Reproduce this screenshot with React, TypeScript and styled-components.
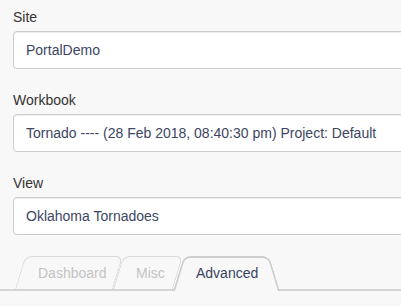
import React from 'react';
import styled, { createGlobalStyle } from 'styled-components';

const GlobalStyle = createGlobalStyle`
  html, body {
    margin: 0;
    padding: 0;
    background: #f8f8f8;
    overflow: hidden;
  }
  body {
    font-family: "Liberation Sans", Arial, sans-serif;
    font-size: 14px;
    color: #333;
  }
`;

const Page = styled.div`
  width: 100%;
  height: 306px;
  padding-top: 7px;
  box-sizing: border-box;
  overflow: hidden;
`;

const Form = styled.div`
  display: flex;
  flex-direction: column;
  gap: 21px;
  padding-left: 13px;
  margin-right: -40px;
`;

const Field = styled.div`
  display: flex;
  flex-direction: column;
  gap: 4px;
`;

const Label = styled.label`
  line-height: 20px;
  color: #333;
`;

const TextInput = styled.input`
  box-sizing: border-box;
  width: 100%;
  height: 38px;
  padding: 0 12px;
  border: 1px solid #ccc;
  border-radius: 4px;
  background: #fff;
  box-shadow: inset 0 1px 1px rgba(0, 0, 0, 0.075);
  font: inherit;
  color: #3c4562;
  outline: none;
`;

const TabBar = styled.div`
  display: flex;
  align-items: flex-end;
  margin-top: 21px;
  padding-left: 15px;
  border-bottom: 2px solid #d4d4d4;
`;

const Tab = styled.div<{ $active?: boolean; $width: number }>`
  position: relative;
  z-index: ${p => (p.$active ? 2 : 1)};
  box-sizing: border-box;
  width: ${p => p.$width}px;
  height: ${p => (p.$active ? 35 : 33)}px;
  margin-bottom: ${p => (p.$active ? -2 : 0)}px;
  padding-left: 23px;
  padding-bottom: ${p => (p.$active ? 2 : 0)}px;
  display: flex;
  align-items: center;
  color: ${p => (p.$active ? '#3a4461' : '#c3c3c3')};
  cursor: pointer;

  &::before {
    content: '';
    position: absolute;
    top: 0;
    bottom: 0;
    left: 0;
    width: ${p => (p.$active ? '60%' : '100%')};
    box-sizing: border-box;
    border: ${p => (p.$active ? '2px solid #cdcdcd' : '1px solid #d9d9d9')};
    border-bottom: none;
    ${p => p.$active && 'border-right: none;'}
    border-radius: ${p => (p.$active ? '7px 0 0 0' : '7px 7px 0 0')};
    background: #f8f8f8;
    transform: skewX(-17deg);
    transform-origin: bottom left;
    z-index: -1;
  }

  &::after {
    content: '';
    display: ${p => (p.$active ? 'block' : 'none')};
    position: absolute;
    top: 0;
    bottom: 0;
    right: 0;
    width: 60%;
    box-sizing: border-box;
    border: 2px solid #cdcdcd;
    border-bottom: none;
    border-left: none;
    border-radius: 0 7px 0 0;
    background: #f8f8f8;
    transform: skewX(17deg);
    transform-origin: bottom right;
    z-index: -1;
  }
`;

const fields = [
  { label: 'Site', value: 'PortalDemo' },
  { label: 'Workbook', value: 'Tornado ---- (28 Feb 2018, 08:40:30 pm) Project: Default' },
  { label: 'View', value: 'Oklahoma Tornadoes' },
];

const tabs = [
  { name: 'Dashboard', width: 98 },
  { name: 'Misc', width: 60 },
  { name: 'Advanced', width: 107, active: true },
];

export default function App() {
  return (
    <Page>
      <GlobalStyle />
      <Form>
        {fields.map(f => (
          <Field key={f.label}>
            <Label>{f.label}</Label>
            <TextInput readOnly defaultValue={f.value} />
          </Field>
        ))}
      </Form>
      <TabBar>
        {tabs.map(t => (
          <Tab key={t.name} $width={t.width} $active={t.active}>
            {t.name}
          </Tab>
        ))}
      </TabBar>
    </Page>
  );
}
